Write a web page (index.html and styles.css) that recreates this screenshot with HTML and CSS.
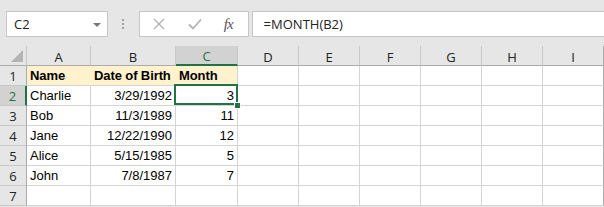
FILE: index.html
```
<!DOCTYPE html>
<html>
<head>
	<title>MONTH</title>
	<link rel="stylesheet" href="styles.css">
</head>
<body>
	<div class="window">
		<!-- 编辑栏 -->
		<div class="toolbar">
			<div class="name-box">
				<span>C2</span>
				<span class="drop"></span>
			</div>
			<div class="dots"><i></i><i></i><i></i></div>
			<div class="buttons">
				<svg class="btn-x" width="12" height="12" viewBox="0 0 12 12"><path d="M1 1L11 11M11 1L1 11" stroke="#b3b3b3" stroke-width="1.4" fill="none"/></svg>
				<svg class="btn-ok" width="14" height="12" viewBox="0 0 14 12"><path d="M1 6.5L5 10.5L13 1.5" stroke="#b3b3b3" stroke-width="1.8" fill="none"/></svg>
				<span class="fx">fx</span>
			</div>
			<div class="formula">=MONTH(B2)</div>
		</div>
		<!-- 表格 -->
		<div class="sheet">
			<div class="hd corner"><span class="tri"></span></div>
			<div class="hd col">A</div>
			<div class="hd col">B</div>
			<div class="hd col on">C</div>
			<div class="hd col">D</div>
			<div class="hd col">E</div>
			<div class="hd col">F</div>
			<div class="hd col">G</div>
			<div class="hd col">H</div>
			<div class="hd col last">I</div>

			<div class="hd row">1</div>
			<div class="cell head">Name</div>
			<div class="cell head">Date of Birth</div>
			<div class="cell head">Month</div>
			<div class="cell"></div><div class="cell"></div><div class="cell"></div><div class="cell"></div><div class="cell"></div><div class="cell last"></div>

			<div class="hd row on">2</div>
			<div class="cell">Charlie</div>
			<div class="cell num">3/29/1992</div>
			<div class="cell num active">3<span class="handle"></span></div>
			<div class="cell"></div><div class="cell"></div><div class="cell"></div><div class="cell"></div><div class="cell"></div><div class="cell last"></div>

			<div class="hd row">3</div>
			<div class="cell">Bob</div>
			<div class="cell num">11/3/1989</div>
			<div class="cell num">11</div>
			<div class="cell"></div><div class="cell"></div><div class="cell"></div><div class="cell"></div><div class="cell"></div><div class="cell last"></div>

			<div class="hd row">4</div>
			<div class="cell">Jane</div>
			<div class="cell num">12/22/1990</div>
			<div class="cell num">12</div>
			<div class="cell"></div><div class="cell"></div><div class="cell"></div><div class="cell"></div><div class="cell"></div><div class="cell last"></div>

			<div class="hd row">5</div>
			<div class="cell">Alice</div>
			<div class="cell num">5/15/1985</div>
			<div class="cell num">5</div>
			<div class="cell"></div><div class="cell"></div><div class="cell"></div><div class="cell"></div><div class="cell"></div><div class="cell last"></div>

			<div class="hd row">6</div>
			<div class="cell">John</div>
			<div class="cell num">7/8/1987</div>
			<div class="cell num">7</div>
			<div class="cell"></div><div class="cell"></div><div class="cell"></div><div class="cell"></div><div class="cell"></div><div class="cell last"></div>

			<div class="hd row">7</div>
			<div class="cell"></div><div class="cell"></div><div class="cell"></div>
			<div class="cell"></div><div class="cell"></div><div class="cell"></div><div class="cell"></div><div class="cell"></div><div class="cell last"></div>
		</div>
	</div>
</body>
</html>
```

FILE: styles.css
```
*{
	margin: 0;
	padding: 0;
	box-sizing: border-box;
}
body{
	background: #fff;
	font-family: "Liberation Sans", Arial, sans-serif;
}
.window{
	width: 604px;
	height: 207px;
	overflow: hidden;
	background: #e6e6e6;
}

/* 编辑栏 */
.toolbar{
	height: 47px;
	display: flex;
	align-items: flex-start;
	padding: 11px 0 0 6px;
	border-top: 1px solid #d9d9d9;
	margin-top: -1px;
}
.name-box,
.buttons,
.formula{
	height: 26px;
	background: #fff;
	border: 1px solid #c6c6c6;
}
.name-box{
	width: 102px;
	display: flex;
	align-items: center;
	justify-content: space-between;
	padding: 0 6px 0 7px;
	font-family: "Open Sans", sans-serif;
	font-size: 13px;
	color: #222;
}
.drop{
	width: 0;
	height: 0;
	border-left: 4px solid transparent;
	border-right: 4px solid transparent;
	border-top: 4px solid #777;
	margin-top: 1px;
}
.dots{
	width: 31px;
	height: 26px;
	display: flex;
	flex-direction: column;
	align-items: center;
	justify-content: center;
	gap: 2px;
}
.dots i{
	display: block;
	width: 2px;
	height: 2px;
	background: #a0a0a0;
}
.buttons{
	width: 110px;
	display: flex;
	align-items: center;
	padding-left: 13px;
}
.btn-ok{
	margin-left: 23px;
}
.fx{
	margin-left: 22px;
	font-family: "Liberation Serif", serif;
	font-style: italic;
	font-size: 15px;
	color: #555;
	letter-spacing: -1px;
}
.formula{
	width: 353px;
	margin-left: 3px;
	border-right: 0;
	padding-left: 11px;
	font-family: "Open Sans", sans-serif;
	font-size: 13px;
	line-height: 24px;
	color: #222;
}

/* 表格 */
.sheet{
	display: grid;
	grid-template-columns: 27px 64px 85px 62px repeat(6, 61px);
	grid-template-rows: repeat(8, 20px);
}
.hd{
	background: #e6e6e6;
	color: #222;
	font-family: "Open Sans", sans-serif;
	font-size: 13px;
	display: flex;
	align-items: center;
	justify-content: center;
}
.col{
	border-right: 1px solid #c8c8c8;
	border-bottom: 1px solid #ababab;
	padding-top: 2px;
}
.col.last{
	border-right: 1px solid #ababab;
}
.row{
	border-right: 1px solid #ababab;
	border-bottom: 1px solid #c8c8c8;
}
.corner{
	position: relative;
	border-right: 1px solid #c8c8c8;
	border-bottom: 1px solid #ababab;
}
.corner .tri{
	position: absolute;
	right: 3px;
	bottom: 3px;
	width: 0;
	height: 0;
	border-left: 12px solid transparent;
	border-bottom: 12px solid #b4b4b4;
}
.hd.on{
	background: #d2d2d2;
	color: #217346;
}
.col.on{
	border-bottom: 2px solid #217346;
}
.row.on{
	border-right: 2px solid #217346;
}

.cell{
	background: #fff;
	border-right: 1px solid #d4d4d4;
	border-bottom: 1px solid #d4d4d4;
	font-family: "Liberation Sans", Arial, sans-serif;
	font-size: 13px;
	color: #000;
	padding: 0 3px 2px 3px;
	display: flex;
	align-items: flex-end;
	white-space: nowrap;
}
.cell.last{
	border-right: 1px solid #ababab;
}
.cell.num{
	justify-content: flex-end;
}
.cell.head{
	background: #fff2cc;
	border-right-color: #fff2cc;
	font-weight: bold;
	letter-spacing: -0.1px;
}
.cell.head:nth-child(14){
	border-right-color: #d4d4d4;
}
.cell.active{
	position: relative;
}
.cell.active:before{
	content: '';
	position: absolute;
	left: -2px;
	top: -2px;
	right: -1px;
	bottom: 0;
	border: 2px solid #217346;
}
.cell.active .handle{
	position: absolute;
	right: -4px;
	bottom: -4px;
	width: 7px;
	height: 7px;
	background: #217346;
	border: 1px solid #fff;
	z-index: 2;
}
```
